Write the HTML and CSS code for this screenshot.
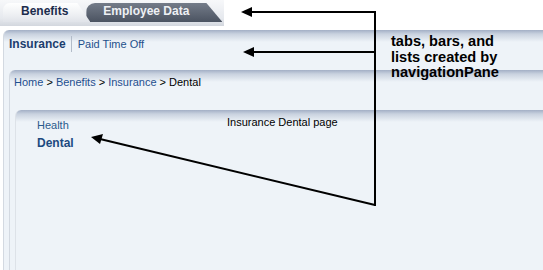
FILE: index.html
```html
<!DOCTYPE html>
<html lang="en">
<head>
    <meta charset="UTF-8">
    <title>navigationPane - Dental</title>
    <link rel="stylesheet" href="styles.css">
</head>
<body>
    <div class="tab-strip">
        <div class="tab selected">Benefits</div>
        <div class="tab">Employee Data</div>
    </div>

    <div class="panel outer">
        <div class="bar">
            <span class="bar-item current">Insurance</span>
            <span class="bar-sep"></span>
            <span class="bar-item">Paid Time Off</span>
        </div>

        <div class="panel crumbs-panel">
            <div class="crumbs">
                <span class="crumb">Home</span> &gt;
                <span class="crumb">Benefits</span> &gt;
                <span class="crumb">Insurance</span> &gt;
                <span class="crumb last">Dental</span>
            </div>

            <div class="panel inner">
                <ul class="side-list">
                    <li>Health</li>
                    <li class="current">Dental</li>
                </ul>
                <div class="content">Insurance Dental page</div>
            </div>
        </div>
    </div>

    <!-- annotation over the screenshot -->
    <div class="note">tabs, bars, and<br>lists created by<br>navigationPane</div>
    <svg class="arrows" width="543" height="270" viewBox="0 0 543 270">
        <g stroke="#000" stroke-width="2" fill="none">
            <path d="M375 12 H250"/>
            <path d="M375 52 H252"/>
            <path d="M375 11 V206"/>
            <path d="M375 205 L100 139"/>
        </g>
        <g fill="#000">
            <path d="M241 12 L252 7 L252 17 Z"/>
            <path d="M243 52 L254 47 L254 57 Z"/>
            <path d="M91 137 L103 134 L100 144 Z"/>
        </g>
    </svg>
</body>
</html>
```

FILE: styles.css
```css
/* Base */
body, html {
    margin: 0;
    padding: 0;
    background: #fff;
    font-family: 'Liberation Sans', Arial, sans-serif;
    font-size: 11px;
    color: #000;
    overflow: hidden;
    height: 270px;
}

/* Tabs */
.tab-strip {
    display: flex;
    width: 224px;
    height: 26px;
    box-sizing: border-box;
    padding: 3px 0 0 3px;
    background: linear-gradient(#f7f8fa, #e6e9ee 70%, #d3d7de);
}

.tab {
    height: 19px;
    line-height: 16px;
    font-size: 12px;
    font-weight: bold;
    color: #eef0f4;
    background: linear-gradient(#747c89, #4b5361);
    border-top-left-radius: 9px;
    margin-left: -4px;
    padding: 0 33px 0 17px;
    /* slanted right edge */
    clip-path: polygon(0 0, calc(100% - 16px) 0, 100% 100%, 0 100%);
}

.tab.selected {
    position: relative;
    z-index: 1;
    margin-left: 0;
    color: #1c2c4c;
    padding: 0 22px 0 18px;
    background: linear-gradient(#ffffff, #eef0f3 60%, #e0e3e9);
    border-top-left-radius: 7px;
    clip-path: polygon(0 0, calc(100% - 13px) 0, 100% 100%, 0 100%);
}

/* Panels with the blue header shading */
.panel {
    background: linear-gradient(#a3afc5 0, #c9d2df 4px, #eef3f8 12px);
    border-left: 1px solid #d3d9e1;
    border-top-left-radius: 6px;
}

.outer {
    margin: 4px 0 0 3px;
    height: 240px;
}

.bar {
    display: flex;
    align-items: center;
    height: 28px;
    padding: 0 0 12px 5px;
    line-height: 14px;
}

.bar-item {
    color: #24508c;
}

.bar-item.current {
    font-size: 12px;
    font-weight: bold;
    color: #1c3d6e;
}

.bar-sep {
    width: 1px;
    height: 16px;
    margin: 0 6px 0 5px;
    background: #b3bcc9;
}

.crumbs-panel {
    margin-left: 5px;
    height: 200px;
}

.crumbs {
    height: 40px;
    box-sizing: border-box;
    padding: 5px 0 0 4px;
    line-height: 14px;
}

.crumb {
    color: #1f4f8f;
}

.crumb.last {
    color: #000;
}

.inner {
    display: flex;
    margin-left: 5px;
    height: 160px;
    border-left-color: #dde2e8;
}

.side-list {
    list-style: none;
    margin: 0;
    padding: 8px 0 0 21px;
    width: 190px;
    line-height: 14px;
}

.side-list li {
    color: #2a5a8c;
    margin-bottom: 4px;
}

.side-list li.current {
    font-size: 12px;
    font-weight: bold;
    color: #1c4a80;
}

.content {
    padding-top: 5px;
    line-height: 14px;
}

/* Annotation */
.note {
    position: absolute;
    left: 391px;
    top: 34px;
    font-family: 'Liberation Sans', Arial, sans-serif;
    font-size: 14.6px;
    font-weight: bold;
    line-height: 15.5px;
    color: #000;
}

.arrows {
    position: absolute;
    left: 0;
    top: 0;
}
```
